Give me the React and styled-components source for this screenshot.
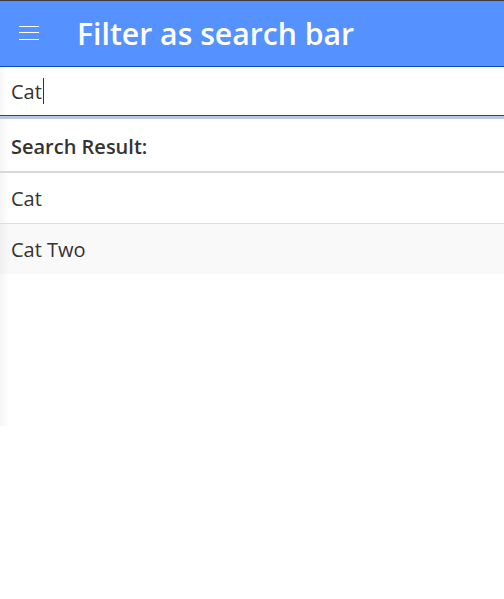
import React from "react";
import styled, { createGlobalStyle } from "styled-components";

const Global = createGlobalStyle`
  html, body { margin: 0; padding: 0; background: #fff; }
  body { font-family: "Open Sans", "Liberation Sans", sans-serif; color: #333; }
`;

const Page = styled.div`
  display: flex;
  flex-direction: column;
  width: 504px;
`;

const Header = styled.header`
  height: 65px;
  border-top: 1px solid #3c3c3c;
  border-bottom: 1px solid #0c4cb4;
  background: #5592ff;
  display: flex;
  align-items: center;
  padding-left: 19px;
  box-sizing: content-box;
`;

const Burger = styled.div`
  width: 20px;
  display: flex;
  flex-direction: column;
  gap: 5.5px;
  margin-right: 38px;
  margin-top: -2px;
`;

const BurgerLine = styled.span`
  display: block;
  height: 1px;
  background: #fff;
`;

const Title = styled.h1`
  margin: 0;
  font-size: 30.2px;
  font-weight: 600;
  color: #fff;
  letter-spacing: 0;
  line-height: 1;
  margin-top: 2px;
`;

const SearchField = styled.div`
  height: 48px;
  display: flex;
  align-items: center;
  padding-left: 11px;
  border-bottom: 1px solid #1a4aa3;
  box-shadow: 0 3px 0 #b9c7e0, inset 8px 0 8px -6px rgba(0, 0, 0, 0.05);
  font-size: 20px;
  color: #333;
  position: relative;
  z-index: 1;
`;

const Caret = styled.span`
  display: inline-block;
  width: 1px;
  height: 26px;
  background: #333;
  margin-left: 1px;
`;

const Panel = styled.section`
  margin-top: 3px;
  height: 307px;
  box-shadow: inset 10px 0 9px -7px rgba(0, 0, 0, 0.06);
  display: flex;
  flex-direction: column;
`;

const ResultHead = styled.div`
  height: 54px;
  display: flex;
  align-items: center;
  padding-left: 11px;
  padding-top: 3px;
  box-sizing: border-box;
  font-size: 20px;
  font-weight: 600;
  color: #333;
  border-bottom: 2px solid #d8d8d8;
`;

const Row = styled.div`
  height: 50px;
  display: flex;
  align-items: center;
  padding-left: 11px;
  font-size: 20px;
  color: #333;
  background: ${(p) => (p.$alt ? "rgba(0,0,0,0.024)" : "transparent")};
  border-bottom: ${(p) => (p.$last ? "none" : "1px solid #dedede")};
`;

const items = ["Cat", "Cat Two"];

export default function App() {
  return (
    <Page>
      <Global />
      <Header>
        <Burger>
          <BurgerLine />
          <BurgerLine />
          <BurgerLine />
        </Burger>
        <Title>Filter as search bar</Title>
      </Header>
      <SearchField>
        Cat
        <Caret />
      </SearchField>
      <Panel>
        <ResultHead>Search Result:</ResultHead>
        {items.map((it, i) => (
          <Row key={it} $alt={i % 2 === 1} $last={i === items.length - 1}>
            {it}
          </Row>
        ))}
      </Panel>
    </Page>
  );
}
